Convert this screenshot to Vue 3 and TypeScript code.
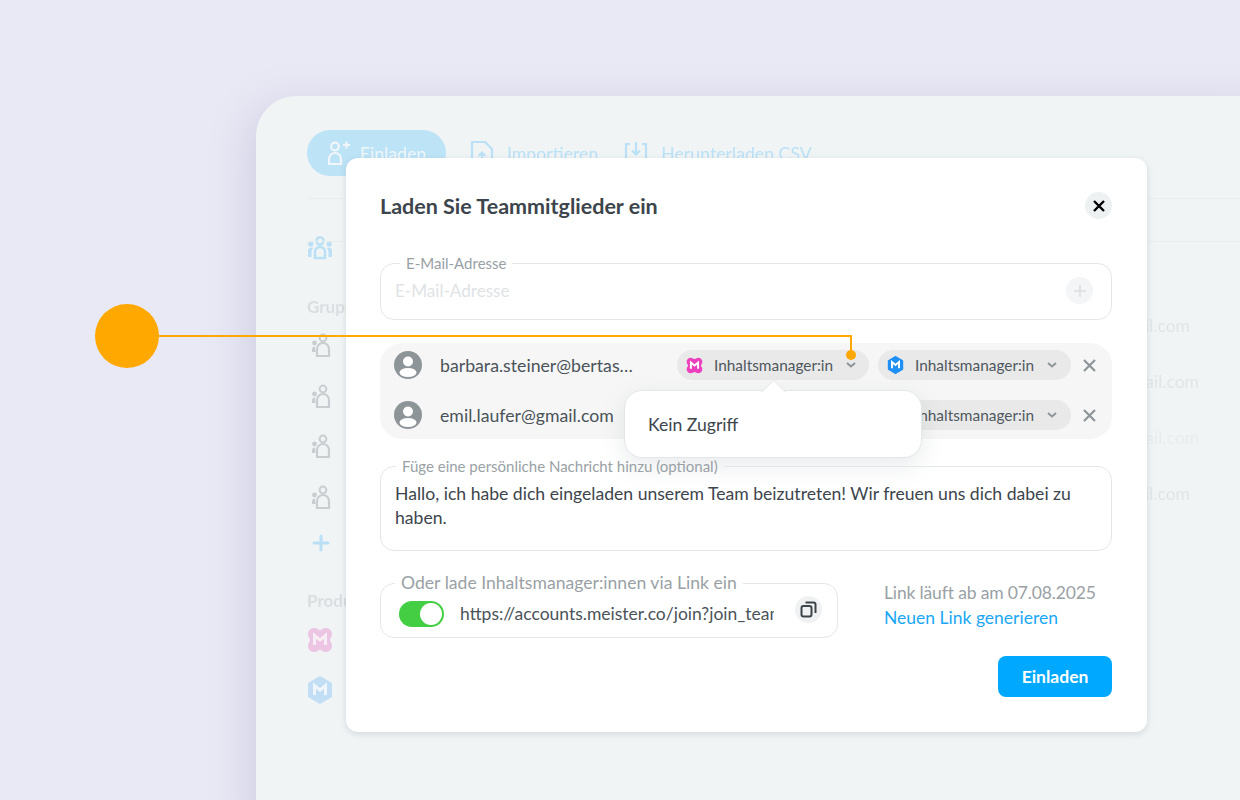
<script setup lang="ts">
const groupRows = [0, 1, 2, 3]

// only the tail of each address shows beside the modal
const mailRows = [
  { id: 1, far: false, faint: false },
  { id: 2, far: true, faint: false },
  { id: 3, far: true, faint: true },
  { id: 4, far: false, faint: false }
]

const invitees = [
  { email: 'barbara.steiner@bertas…', covered: false },
  { email: 'emil.laufer@gmail.com', covered: true }
]

// product marks, used in the sidebar and in the chips
const cloverPath =
  'M7.5 1C10 1 11 3 13 3S16 1 18.5 1C22.5 1 25 3.5 25 7.5C25 10 23 11 23 13S25 16 25 18.5C25 22.5 22.5 25 18.5 25C16 25 15 23 13 23S10 25 7.5 25C3.5 25 1 22.5 1 18.5C1 16 3 15 3 13S1 10 1 7.5C1 3.5 3.5 1 7.5 1z'
const hexPath = 'M13 1l11 6.5v13L13 27 2 20.5v-13z'
</script>

<template>
  <div class="page">
    <div class="window">
      <div class="backdrop">
        <div class="toolbar">
          <div class="invite-pill">
            <svg width="26" height="26" viewBox="0 0 26 26" fill="none" stroke="currentColor" stroke-width="2.2">
              <circle cx="9" cy="6.5" r="3.8" />
              <path d="M3 24v-5a6 6 0 0 1 12 0v5z" />
              <path d="M17 5h7M20.5 1.5v7" />
            </svg>
            <span>Einladen</span>
          </div>
          <div class="tool">
            <svg width="24" height="26" viewBox="0 0 24 26" fill="none" stroke="currentColor" stroke-width="2.2">
              <path d="M2 2h13l7 7v15H2z" stroke-linejoin="round" />
              <path d="M12 21v-8M8.5 16l3.5-3.5 3.5 3.5" />
            </svg>
            <span>Importieren</span>
          </div>
          <div class="tool">
            <svg width="24" height="24" viewBox="0 0 24 24" fill="none" stroke="currentColor" stroke-width="2.2">
              <path d="M6 3H2v19h20V3h-4" />
              <path d="M12 1v12M8 9.5l4 4 4-4" />
            </svg>
            <span>Herunterladen CSV</span>
          </div>
        </div>
        <div class="rule rule-top"></div>
        <div class="rule rule-mid"></div>
        <div class="content">
          <aside class="side">
            <svg class="team" width="26" height="24" viewBox="0 0 26 24" fill="#b9e0f5">
              <circle cx="13" cy="5" r="3.6" fill="none" stroke="#b9e0f5" stroke-width="2.4" />
              <circle cx="3.8" cy="8" r="2.6" />
              <circle cx="22.2" cy="8" r="2.6" />
              <path d="M1 21v-6c0-2 1.5-3.5 4-3.5l1.5.5C5 13 4.5 14 4.5 16v5zM25 21v-6c0-2-1.500-3.500-4-3.500l-1.500.5c1.500 1 2 2 2 4v5z" />
              <path d="M8 22v-6a5 5 0 0 1 10 0v6z" fill="none" stroke="#b9e0f5" stroke-width="2.4" />
            </svg>
            <div class="side-title">Gruppen</div>
            <div class="groups">
              <svg v-for="g in groupRows" :key="g" width="20" height="24" viewBox="0 0 20 24" fill="#c9cdcf">
                <circle cx="12" cy="5" r="3.4" fill="none" stroke="#c9cdcf" stroke-width="2" />
                <circle cx="3.5" cy="10" r="2.4" />
                <path d="M1 19v-2.5c0-2 1-3 3-3l.5 5.5z" />
                <path d="M6 23v-7a6 6 0 0 1 12 0v7z" fill="none" stroke="#c9cdcf" stroke-width="2.2" />
              </svg>
            </div>
            <svg class="add" width="18" height="18" viewBox="0 0 18 18" fill="none" stroke="#b9e0f5" stroke-width="3" stroke-linecap="round">
              <path d="M9 2v14M2 9h14" />
            </svg>
            <div class="side-title prod">Produkte</div>
            <svg class="prod-icon" width="26" height="26" viewBox="0 0 26 26">
              <path :d="cloverPath" fill="#ecc4e4" />
              <path d="M7.5 18V8.5L13 13l5.5-4.5V18" fill="none" stroke="#f7edf5" stroke-width="3" />
            </svg>
            <svg class="prod-icon second" width="26" height="28" viewBox="0 0 26 28">
              <path :d="hexPath" fill="#c2def5" stroke="#c2def5" stroke-width="2" stroke-linejoin="round" />
              <path d="M7.5 19V9.5L13 14l5.5-4.5V19" fill="none" stroke="#eef6fc" stroke-width="3" />
            </svg>
          </aside>
          <div class="mails">
            <div
              v-for="m in mailRows"
              :key="m.id"
              class="mail"
              :class="{ far: m.far, faint: m.faint }"
            >gmail.com</div>
          </div>
        </div>
      </div>
    </div>

    <section class="modal">
      <header class="modal-head">
        <h2>Laden Sie Teammitglieder ein</h2>
        <button class="close">
          <svg width="12" height="12" viewBox="0 0 12 12" fill="none" stroke="#000" stroke-width="2.4">
            <path d="M1 1l10 10M11 1L1 11" />
          </svg>
        </button>
      </header>

      <fieldset class="field email-field">
        <legend>E-Mail-Adresse</legend>
        <span class="placeholder">E-Mail-Adresse</span>
        <span class="plus">
          <svg width="12" height="12" viewBox="0 0 12 12" fill="none" stroke="#dfe3e5" stroke-width="2">
            <path d="M6 0v12M0 6h12" />
          </svg>
        </span>
      </fieldset>

      <div class="invitees">
        <div v-for="person in invitees" :key="person.email" class="invitee">
          <svg class="avatar" width="28" height="28" viewBox="0 0 28 28">
            <circle cx="14" cy="14" r="14" fill="#8d9599" />
            <circle cx="14" cy="10.5" r="5" fill="#fff" />
            <ellipse cx="14" cy="21.5" rx="8.5" ry="4.5" fill="#fff" />
          </svg>
          <span class="address">{{ person.email }}</span>
          <div class="chip first-chip" :class="{ covered: person.covered }">
            <svg width="17" height="17" viewBox="0 0 26 26">
              <path :d="cloverPath" fill="#ee3fbe" />
              <path d="M7.5 18V8.5L13 13l5.5-4.5V18" fill="none" stroke="#fff" stroke-width="3" />
            </svg>
            <span>Inhaltsmanager:in</span>
            <svg class="chev" width="10" height="6" viewBox="0 0 10 6" fill="none" stroke="#8d9599" stroke-width="2">
              <path d="M1 1l4 3.5L9 1" />
            </svg>
          </div>
          <div class="chip second-chip">
            <svg width="17" height="18" viewBox="0 0 26 28">
              <path :d="hexPath" fill="#1e8ff5" stroke="#1e8ff5" stroke-width="2" stroke-linejoin="round" />
              <path d="M7.5 19V9.5L13 14l5.5-4.5V19" fill="none" stroke="#fff" stroke-width="3" />
            </svg>
            <span>Inhaltsmanager:in</span>
            <svg class="chev" width="10" height="6" viewBox="0 0 10 6" fill="none" stroke="#8d9599" stroke-width="2">
              <path d="M1 1l4 3.5L9 1" />
            </svg>
          </div>
          <svg class="remove" width="13" height="13" viewBox="0 0 13 13" fill="none" stroke="#8d9599" stroke-width="2.2">
            <path d="M1 1l11 11M12 1L1 12" />
          </svg>
        </div>
        <div class="menu">
          <span class="menu-arrow"></span>
          <span>Kein Zugriff</span>
        </div>
      </div>

      <fieldset class="field message-field">
        <legend>Füge eine persönliche Nachricht hinzu (optional)</legend>
        <p>Hallo, ich habe dich eingeladen unserem Team beizutreten! Wir freuen uns dich dabei zu haben.</p>
      </fieldset>

      <div class="link-row">
        <fieldset class="field link-field">
          <legend>Oder lade Inhaltsmanager:innen via Link ein</legend>
          <span class="switch"><span class="knob"></span></span>
          <span class="url">https://accounts.meister.co/join?join_team=8f2a</span>
          <span class="copy">
            <svg width="17" height="17" viewBox="0 0 17 17" fill="none" stroke="#3c454c" stroke-width="2">
              <rect x="1.5" y="5" width="10" height="10.5" rx="2" />
              <path d="M5.5 1.5h8a2 2 0 0 1 2 2V12" />
            </svg>
          </span>
        </fieldset>
        <div class="expiry">
          <div class="expiry-date">Link läuft ab am 07.08.2025</div>
          <a>Neuen Link generieren</a>
        </div>
      </div>

      <footer class="modal-foot">
        <button class="primary">Einladen</button>
      </footer>
    </section>

    <div class="callout">
      <span class="callout-dot"></span>
      <span class="callout-line"></span>
      <span class="callout-end"></span>
    </div>
  </div>
</template>

<style>
html, body {
  margin: 0;
  background: #e9e9f5;
}
</style>

<style scoped>
.page {
  position: relative;
  width: 1240px;
  height: 800px;
  overflow: hidden;
  background: #e9e9f5;
  font-family: Lato, "Open Sans", sans-serif;
  color: #3c454c;
}

.window {
  position: absolute;
  left: 256px;
  top: 96px;
  width: 1040px;
  height: 760px;
  border-radius: 40px;
  background: #f0f4f5;
  box-shadow: -8px 8px 40px rgba(120, 120, 170, 0.22);
  overflow: hidden;
}

.backdrop {
  position: relative;
  height: 100%;
  filter: blur(0.6px);
}

.toolbar {
  display: flex;
  align-items: center;
  padding: 34px 0 0 51px;
  color: #bbe1f6;
  font-size: 17.7px;
}

.invite-pill {
  display: flex;
  align-items: center;
  gap: 8px;
  width: 139px;
  height: 46px;
  box-sizing: border-box;
  padding-left: 19px;
  border-radius: 23px;
  background: #bde3f6;
  color: #f0f6f9;
  margin-right: 24px;
}

.tool {
  display: flex;
  align-items: center;
  gap: 13px;
  margin-right: 26px;
}

.rule {
  position: absolute;
  left: 51px;
  right: 0;
  height: 1px;
  background: #e8edee;
}

.rule-top { top: 102px; }
.rule-mid { top: 145px; }

.content {
  display: flex;
  justify-content: space-between;
}

.side {
  display: flex;
  flex-direction: column;
  align-items: flex-start;
  padding: 60px 0 0 51px;
}

.side-title {
  margin-top: 36px;
  font-size: 17px;
  font-weight: 700;
  color: #dadee0;
}

.groups {
  display: flex;
  flex-direction: column;
  gap: 26.5px;
  margin-top: 16px;
  padding-left: 4px;
}

.add {
  margin: 25px 0 0 5px;
}

.side-title.prod {
  margin-top: 38px;
}

.prod-icon {
  margin-top: 16px;
}

.prod-icon.second {
  margin-top: 23px;
}

.mails {
  display: flex;
  flex-direction: column;
  align-items: flex-end;
  gap: 36px;
  padding-top: 140px;
  margin-right: 106px;
}

.mail {
  height: 20px;
  line-height: 20px;
  font-size: 17.5px;
  white-space: nowrap;
  color: #e1e5e7;
}

.mail.far {
  transform: translateX(9px);
}

.mail.faint {
  color: #e8ecee;
}

.modal {
  position: absolute;
  left: 346px;
  top: 158px;
  width: 801px;
  height: 574px;
  box-sizing: border-box;
  padding: 34px 35px 0 34px;
  border-radius: 12px;
  background: #fff;
  box-shadow: 0 2px 6px rgba(110, 120, 130, 0.22);
}

.modal-head {
  display: flex;
  align-items: center;
  justify-content: space-between;
  height: 27px;
}

.modal-head h2 {
  margin: 0;
  font-size: 21.5px;
  font-weight: 700;
  color: #3c454c;
}

.close {
  display: flex;
  align-items: center;
  justify-content: center;
  width: 27px;
  height: 27px;
  padding: 0;
  border: none;
  border-radius: 50%;
  background: #edf1f2;
}

.field {
  position: relative;
  margin: 0;
  box-sizing: border-box;
  border: 1px solid #e4e7e9;
  border-radius: 14px;
  min-width: 0;
}

.field legend {
  padding: 0 6px;
  color: #99a1a5;
  line-height: 14px;
}

.email-field {
  display: flex;
  margin-top: 37px;
  height: 64px;
  padding: 0 14px;
  align-items: center;
}

.email-field legend {
  margin-left: 5px;
  font-size: 15px;
}

.placeholder {
  position: absolute;
  left: 14px;
  top: 10px;
  font-size: 17.1px;
  color: #dfe3e6;
}

.plus {
  position: absolute;
  right: 18px;
  top: 7px;
  display: flex;
  align-items: center;
  justify-content: center;
  width: 27px;
  height: 27px;
  border-radius: 50%;
  background: #f4f5f7;
}

.invitees {
  position: relative;
  margin-top: 23px;
  height: 96px;
  padding-top: 7px;
  box-sizing: border-box;
  border-radius: 22px;
  background: #f6f6f6;
}

.invitee {
  display: flex;
  align-items: center;
  height: 30px;
  padding-left: 14px;
  margin-bottom: 20px;
  font-size: 17.7px;
}

.avatar {
  flex: none;
}

.address {
  width: 237px;
  margin-left: 18px;
  white-space: nowrap;
  color: #4a5359;
}

.chip {
  display: flex;
  align-items: center;
  width: 192px;
  height: 30px;
  box-sizing: border-box;
  padding-left: 9px;
  border-radius: 15px;
  background: #e9e9e9;
  font-size: 15.4px;
  color: #4f585e;
}

.chip span {
  width: 119px;
  margin-left: 11px;
  white-space: nowrap;
}

.chev {
  margin-left: 13px;
}

.first-chip {
  margin-right: 9px;
}

.second-chip {
  width: 193px;
}

/* this chip sits fully under the open menu */
.covered {
  visibility: hidden;
}

.remove {
  margin-left: 12px;
}

.menu {
  position: absolute;
  left: 244px;
  top: 47px;
  width: 298px;
  height: 68px;
  box-sizing: border-box;
  display: flex;
  align-items: center;
  padding-left: 23px;
  border: 1px solid #e4e7e9;
  border-radius: 18px;
  background: #fff;
  box-shadow: 0 8px 24px rgba(100, 110, 120, 0.14);
  font-size: 17.6px;
  color: #3c454c;
}

.menu-arrow {
  position: absolute;
  left: 140px;
  top: -8.5px;
  width: 16px;
  height: 16px;
  border-left: 1px solid #e4e7e9;
  border-top: 1px solid #e4e7e9;
  background: #fff;
  transform: rotate(45deg);
}

.message-field {
  margin-top: 20px;
  height: 92px;
  padding: 0 14px;
}

.message-field legend {
  margin-left: 1px;
  font-size: 15px;
}

.message-field p {
  margin: 9px 0 0;
  font-size: 17.6px;
  line-height: 24px;
  color: #3c454c;
}

.link-row {
  display: flex;
  margin-top: 25px;
}

.link-field {
  display: flex;
  align-items: center;
  width: 458px;
  height: 62px;
  padding: 0 15px 0 18px;
}

.link-field legend {
  margin-left: -4px;
  font-size: 17.6px;
}

.switch {
  flex: none;
  position: relative;
  width: 45px;
  height: 26px;
  border-radius: 13px;
  background: #43ce44;
}

.knob {
  position: absolute;
  right: 2px;
  top: 2px;
  width: 22px;
  height: 22px;
  border-radius: 50%;
  background: #fff;
}

.url {
  margin-left: 16px;
  width: 314px;
  overflow: hidden;
  white-space: nowrap;
  font-size: 17.5px;
  color: #4a5359;
}

.copy {
  display: flex;
  align-items: center;
  justify-content: center;
  flex: none;
  width: 27px;
  height: 27px;
  margin: 0 0 8px auto;
  border-radius: 50%;
  background: #f0f1f2;
}

.expiry {
  margin: 4px 0 0 46px;
  font-size: 17.5px;
  line-height: 25px;
  color: #99a1a5;
}

.expiry-date {
  letter-spacing: -0.15px;
}

.expiry a {
  color: #1aa7f5;
}

.modal-foot {
  display: flex;
  justify-content: flex-end;
  margin-top: 18px;
}

.primary {
  width: 114px;
  height: 41px;
  border: none;
  border-radius: 8px;
  background: #00a9ff;
  color: #fff;
  font-family: inherit;
  font-size: 17.5px;
  font-weight: 700;
}

.callout {
  position: absolute;
  inset: 0;
  pointer-events: none;
}

.callout-dot {
  position: absolute;
  left: 95px;
  top: 304px;
  width: 64px;
  height: 64px;
  border-radius: 50%;
  background: #ffa800;
}

.callout-line {
  position: absolute;
  left: 159px;
  top: 335px;
  width: 691px;
  height: 18px;
  border-top: 2px solid #ffa800;
  border-right: 2px solid #ffa800;
}

.callout-end {
  position: absolute;
  left: 846px;
  top: 350px;
  width: 10px;
  height: 10px;
  border-radius: 50%;
  background: #ffa800;
}
</style>
